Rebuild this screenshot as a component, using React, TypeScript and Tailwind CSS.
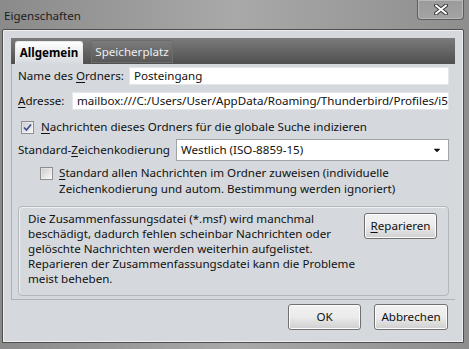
import { FaCaretDown } from 'react-icons/fa';

const font = "font-['Noto_Sans',sans-serif]";

const Key = ({ c }: { c: string }) => <span className="underline underline-offset-2">{c}</span>;

const CheckBox = ({ checked }: { checked?: boolean }) => (
  <div className="w-[13px] h-[13px] border border-[#8f8f8f] bg-gradient-to-br from-[#dcdcdc] to-[#fbfbfb] flex items-center justify-center shrink-0">
    <div className="w-[9px] h-[9px] bg-gradient-to-br from-[#cfcfcf] to-[#f4f4f4] flex items-center justify-center">
      {checked && (
        <svg width="9" height="9" viewBox="0 0 9 9">
          <path d="M1 4.5 L3.5 7 L8 1.5" stroke="#3b4f8f" strokeWidth="1.7" fill="none" />
        </svg>
      )}
    </div>
  </div>
);

const Button = ({ children, className }: { children: React.ReactNode; className: string }) => (
  <div
    className={`flex items-center justify-center rounded-[3px] border border-[#707070] bg-gradient-to-b from-[#f2f2f2] via-[#ebebeb] to-[#cfcfcf] shadow-[inset_0_0_0_1px_#fcfcfc] text-[#101010] ${className}`}
  >
    {children}
  </div>
);

const App = () => {
  return (
    <div
      className={`w-[469px] h-[349px] flex flex-col bg-gradient-to-r from-[#8a8a8a] via-[#a9a9a9] to-[#8e8e8e] ${font} text-[11.6px] text-[#111]`}
    >
      <div className="h-[29px] flex justify-between items-start">
        <div className="pl-[4px] pt-[8px] text-[#1c1c1c] leading-[16px]">Eigenschaften</div>
        <div className="w-[47px] h-[20px] mr-[5px] rounded-b-[4px] border border-t-0 border-[#5e5e5e] shadow-[inset_0_0_0_1px_#b8b8b8] bg-gradient-to-b from-[#9a9a9a] to-[#a4a4a4] flex items-center justify-center">
          <svg width="14" height="11" viewBox="0 0 14 11">
            <path d="M2 1.5 L12 9.5 M12 1.5 L2 9.5" stroke="#3c3c3c" strokeWidth="4" strokeLinecap="round" />
            <path d="M2 1.5 L12 9.5 M12 1.5 L2 9.5" stroke="#ffffff" strokeWidth="2" strokeLinecap="round" />
          </svg>
        </div>
      </div>
      <div className="mx-[2px] mr-[5px] h-[314px] rounded-t-[2px] border border-[#4e4e4e] shadow-[inset_0_0_0_1px_#eceef0] bg-[#d5d9dd] flex flex-col px-[8px] pt-[8px]">
        <div className="h-[26px] bg-gradient-to-b from-[#7b7b7b] to-[#4f4f4f] flex items-end pl-[4px] gap-[8px]">
          <div className="w-[68px] h-[23px] rounded-t-[3px] border border-b-0 border-[#e8eaec] bg-gradient-to-b from-[#ffffff] to-[#d5d9dd] flex items-center justify-center font-bold text-[#000]">
            Allgemein
          </div>
          <div className="w-[82px] h-[23px] mb-[1px] rounded-t-[3px] bg-gradient-to-b from-[#7c7c7c] to-[#585858] border border-[#6c6c6c] flex items-center justify-center text-[#eeeeee]">
            Speicherplatz
          </div>
        </div>
        <div className="h-[236px] border-l border-b border-[#aeb2b6] flex flex-col px-[6px] pt-[3px]">
          <div className="flex items-center h-[18px]">
            <div className="w-[111px]">
              Name des <Key c="O" />rdners:
            </div>
            <div className="flex-1 h-[18px] bg-white border border-[#e4e7ea] pl-[4px] leading-[16px]">Posteingang</div>
          </div>
          <div className="flex items-center h-[18px] mt-[7px]">
            <div className="w-[54px]">
              <Key c="A" />dresse:
            </div>
            <div className="flex-1 min-w-0 h-[18px] bg-white border border-[#e4e7ea] pl-[4px] leading-[16px] overflow-hidden whitespace-nowrap">
              mailbox:///C:/Users/User/AppData/Roaming/Thunderbird/Profiles/i5e
            </div>
          </div>
          <div className="flex items-center h-[16px] mt-[9px] pl-[3px] gap-[7px]">
            <CheckBox checked />
            <div>
              <Key c="N" />achrichten dieses Ordners für die globale Suche indizieren
            </div>
          </div>
          <div className="flex items-center h-[22px] mt-[4px]">
            <div className="w-[158px]">
              Standard-<Key c="Z" />eichenkodierung
            </div>
            <div className="flex-1 h-[22px] bg-white border border-[#a2a5a8] pl-[4px] pr-[6px] flex items-center justify-between">
              <span>Westlich (ISO-8859-15)</span>
              <FaCaretDown className="text-[10px] text-[#111]" />
            </div>
          </div>
          <div className="flex mt-[4px] pl-[22px] gap-[6px]">
            <div className="pt-[2px]">
              <CheckBox />
            </div>
            <div className="leading-[16px]">
              <Key c="S" />tandard allen Nachrichten im Ordner zuweisen (individuelle
              <br />
              Zeichenkodierung und autom. Bestimmung werden ignoriert)
            </div>
          </div>
          <div className="mt-[9px] h-[90px] rounded-[4px] border border-[#b3b7bb] shadow-[inset_1px_1px_0_#eef0f2] flex justify-between pl-[9px] pr-[11px] pt-[4px]">
            <div className="leading-[15px]">
              Die Zusammenfassungsdatei (*.msf) wird manchmal
              <br />
              beschädigt, dadurch fehlen scheinbar Nachrichten oder
              <br />
              gelöschte Nachrichten werden weiterhin aufgelistet.
              <br />
              Reparieren der Zusammenfassungsdatei kann die Probleme
              <br />
              meist beheben.
            </div>
            <Button className="w-[73px] h-[26px] mt-[2px]">
              <Key c="R" />eparieren
            </Button>
          </div>
        </div>
        <div className="flex justify-end gap-[13px] mt-[4px] pr-[7px]">
          <Button className="w-[73px] h-[26px]">OK</Button>
          <Button className="w-[74px] h-[26px]">Abbrechen</Button>
        </div>
      </div>
    </div>
  );
};

export default App;
